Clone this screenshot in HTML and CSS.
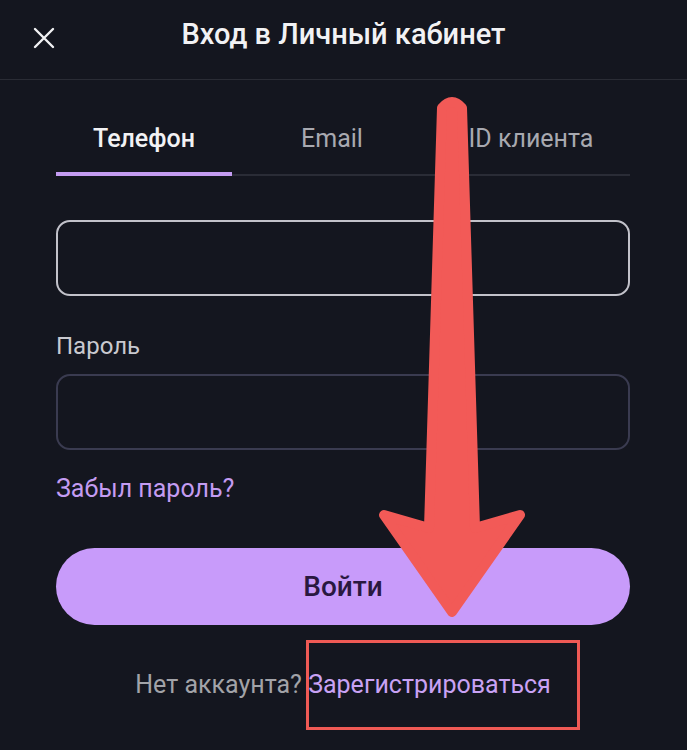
FILE: index.html
```html
<!DOCTYPE html>
<html lang="ru">
<head>
    <meta charset="UTF-8">
    <meta name="viewport" content="width=device-width, initial-scale=1.0">
    <title>Вход в Личный кабинет</title>
    <link rel="stylesheet" href="styles.css">
</head>
<body>
    <div class="screen">
        <header class="header">
            <button class="close-btn" aria-label="Закрыть">
                <svg width="22" height="22" viewBox="0 0 22 22">
                    <path d="M2 2 L20 20 M20 2 L2 20" stroke="#f2f2f4" stroke-width="2.4" stroke-linecap="round"/>
                </svg>
            </button>
            <h1 class="title">Вход в Личный кабинет</h1>
        </header>

        <main class="form">
            <div class="tabs">
                <div class="tab active">Телефон</div>
                <div class="tab">Email</div>
                <div class="tab">ID клиента</div>
            </div>

            <div class="field field-focus"></div>

            <label class="label">Пароль</label>
            <div class="field"></div>

            <a class="forgot" href="#">Забыл пароль?</a>

            <button class="login-btn">Войти</button>

            <p class="signup">Нет аккаунта? <a href="#">Зарегистрироваться</a></p>
        </main>

        <!-- annotation on top of the screenshot -->
        <div class="highlight-box"></div>
        <svg class="arrow" width="687" height="750" viewBox="0 0 687 750">
            <path d="M442 108 Q452 96 462 108 L475 528 L520 515 L452 612 L384 515 L429 528 Z"
                  fill="#f25a57" stroke="#f25a57" stroke-width="10" stroke-linejoin="round"/>
        </svg>
    </div>
</body>
</html>
```

FILE: styles.css
```css
body {
    margin: 0;
    background-color: #14161f;
    font-family: Roboto, "Noto Sans", sans-serif;
    color: #f2f2f4;
}

.screen {
    position: relative;
    width: 687px;
    height: 750px;
    overflow: hidden;
}

.header {
    height: 80px;
    display: flex;
    align-items: center;
    justify-content: center;
    position: relative;
    border-bottom: 1px solid #2a2c35;
    box-sizing: border-box;
}

.close-btn {
    position: absolute;
    left: 33px;
    top: 27px;
    background: none;
    border: none;
    padding: 0;
    width: 22px;
    height: 22px;
}

.title {
    margin: 0 0 12px;
    font-size: 29px;
    font-weight: 500;
    line-height: 34px;
}

.form {
    padding: 0 57px 0 56px;
    display: flex;
    flex-direction: column;
}

.tabs {
    display: grid;
    grid-template-columns: 176px 200px 1fr;
    margin-top: 44px;
    border-bottom: 2px solid #2a2c36;
}

.tab {
    text-align: center;
    font-size: 25px;
    line-height: 30px;
    color: #a8a9b0;
    padding-bottom: 18px;
    margin-bottom: -2px;
    border-bottom: 4px solid transparent;
}

.tab.active {
    color: #f2f2f4;
    font-weight: 500;
    border-bottom-color: #c49cf2;
    border-radius: 2px 2px 0 0;
}

.field {
    height: 76px;
    border: 2px solid #3a3b50;
    border-radius: 14px;
    box-sizing: border-box;
}

.field-focus {
    margin-top: 44px;
    border-color: #c2c2ca;
}

.label {
    margin: 36px 0 14px;
    font-size: 24px;
    line-height: 28px;
    color: #c9c9cf;
}

.forgot {
    margin-top: 25px;
    font-size: 25px;
    line-height: 28px;
    color: #c49cf2;
    text-decoration: none;
    align-self: flex-start;
}

.login-btn {
    margin-top: 45px;
    height: 77px;
    border: none;
    border-radius: 39px;
    background-color: #c89bfa;
    color: #2a1840;
    font-family: inherit;
    font-size: 28px;
    font-weight: 500;
}

.signup {
    margin: 46px 0 0;
    text-align: center;
    font-size: 25px;
    line-height: 28px;
    color: #a2a3a8;
}

.signup a {
    color: #c9a2f4;
    text-decoration: none;
}

.highlight-box {
    position: absolute;
    left: 306px;
    top: 640px;
    width: 274px;
    height: 90px;
    border: 3px solid #f05a55;
    box-sizing: border-box;
}

.arrow {
    position: absolute;
    left: 0;
    top: 0;
    pointer-events: none;
}
```
